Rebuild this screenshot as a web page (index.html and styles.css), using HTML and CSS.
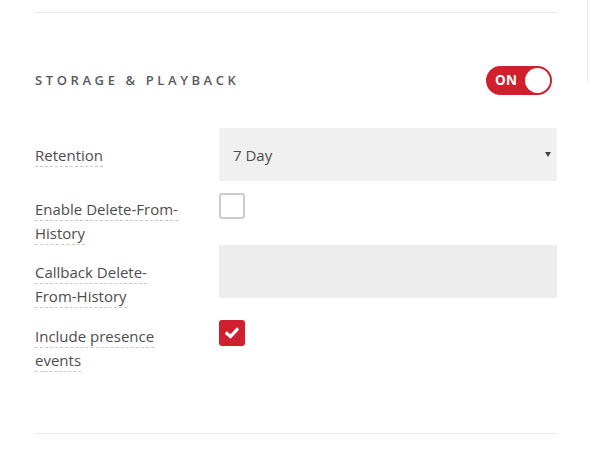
FILE: index.html
```html
<!DOCTYPE html>
<html>
<head>
<meta charset="utf-8">
<link rel="stylesheet" href="styles.css">
</head>
<body>
<div class="page">
  <div class="panel">
    <hr class="rule rule--top">
    <div class="section-head">
      <h2 class="section-title">STORAGE &amp; PLAYBACK</h2>
      <div class="toggle"><span class="toggle-text">ON</span><span class="toggle-knob"></span></div>
    </div>
    <div class="fields">
      <div class="field field--input">
        <div class="field-label"><span class="label-text">Retention</span></div>
        <div class="select"><span class="select-value">7 Day</span><span class="select-arrow"></span></div>
      </div>
      <div class="field field--check field--gap">
        <div class="field-label"><span class="label-text">Enable Delete-From-History</span></div>
        <div class="checkbox"></div>
      </div>
      <div class="field field--input">
        <div class="field-label"><span class="label-text">Callback Delete-From-History</span></div>
        <div class="text-input"></div>
      </div>
      <div class="field field--check field--gap">
        <div class="field-label"><span class="label-text">Include presence events</span></div>
        <div class="checkbox checkbox--on">
          <svg width="14" height="12" viewBox="0 0 14 12"><polyline points="2,6.5 5.5,9.5 12,2.5" fill="none" stroke="#fff" stroke-width="3.2" stroke-linecap="square" stroke-linejoin="miter"/></svg>
        </div>
      </div>
    </div>
    <hr class="rule rule--bottom">
  </div>
  <div class="side-divider"></div>
</div>
</body>
</html>
```

FILE: styles.css
```css
* { box-sizing: border-box; }
html, body { margin: 0; padding: 0; background: #fff; }
body { font-family: "Open Sans", "Liberation Sans", sans-serif; color: #4d4d4d; }

.page { display: flex; align-items: flex-start; }
.panel { width: 557px; padding-left: 35px; }
.side-divider { width: 1px; height: 83px; background: #ececec; margin-left: 30px; }

.rule { border: 0; height: 1px; background: #e9e9e9; margin: 0; }
.rule--top { margin-top: 12px; }
.rule--bottom { margin-top: 61px; }

.section-head { display: flex; align-items: center; justify-content: space-between; margin-top: 53px; height: 29px; }
.section-title { margin: 0; font-size: 13px; font-weight: 600; letter-spacing: 3.6px; color: #555a62; line-height: 1; }

.toggle { width: 66px; height: 29px; margin-right: 5px; border-radius: 15px; background: #d0202e; position: relative; display: flex; align-items: center; padding-left: 9px; }
.toggle-text { color: #fff; font-weight: 700; font-size: 13.5px; letter-spacing: 0.2px; line-height: 1; }
.toggle-knob { position: absolute; right: 2px; top: 2px; width: 25px; height: 25px; border-radius: 50%; background: #fff; }

.fields { margin-top: 33px; }
.field { display: flex; align-items: flex-start; }
.field--gap { margin-top: 12px; }
.field-label { width: 184px; flex: none; padding-right: 34px; font-size: 15px; line-height: 24px; color: #4d4d4d; }
.field--input .field-label { padding-top: 15px; }
.field--check .field-label { padding-top: 4px; }
.label-text { border-bottom: 1px dashed #c9c9c9; padding-bottom: 1px; }

.select { flex: 1; height: 53px; background: #f0f0f0; display: flex; align-items: center; justify-content: space-between; padding: 0 6px 0 14px; }
.select-value { font-size: 15px; color: #4d4d4d; }
.select-arrow { width: 0; height: 0; border-left: 3px solid transparent; border-right: 3px solid transparent; border-top: 5px solid #444; }

.text-input { flex: 1; height: 53px; background: #ededed; }

.checkbox { width: 26px; height: 26px; border: 2px solid #cccccc; border-radius: 3px; background: #fff; }
.checkbox--on { background: #d0202e; border-color: #d0202e; display: flex; align-items: center; justify-content: center; }
```
